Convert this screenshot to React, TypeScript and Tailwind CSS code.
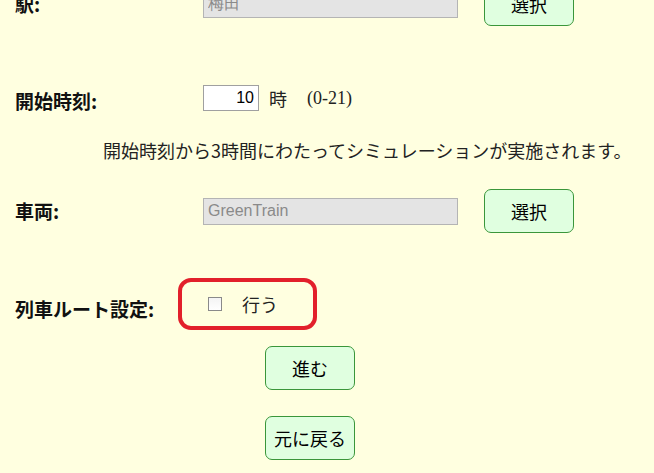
const jp = "font-['Noto_Sans_CJK_JP',sans-serif]";

function SelectButton({ label }: { label: string }) {
  return (
    <button
      type="button"
      className={`h-[44px] w-[90px] shrink-0 rounded-[7px] border-[1.5px] border-[#3a963a] bg-[#e0ffe0] text-[18px] leading-none text-black ${jp}`}
    >
      {label}
    </button>
  );
}

function Label({ text, className = "w-[188px]" }: { text: string; className?: string }) {
  return (
    <div className={`shrink-0 text-[19px] font-bold leading-[24px] text-[#111] ${jp} ${className}`}>
      {text}
    </div>
  );
}

function ReadonlyField({ value }: { value: string }) {
  return (
    <input
      readOnly
      value={value}
      className="h-[27px] w-[255px] shrink-0 border border-[#b4b4b4] bg-[#e4e4e4] px-[4px] font-['Liberation_Sans',sans-serif] text-[16px] text-[#8a8a8a] outline-none"
    />
  );
}

export default function App() {
  return (
    <div className="h-[473px] w-full overflow-hidden bg-[#ffffe0]">
      <div className="-mt-[18px] flex flex-col pl-[15px]">
        {/* 駅 */}
        <div className="flex items-center">
          <Label text="駅:" />
          <ReadonlyField value="梅田" />
          <div className="w-[26px]" />
          <SelectButton label="選択" />
        </div>

        {/* 開始時刻 */}
        <div className="mt-[59px] flex items-center">
          <Label text="開始時刻:" className="w-[188px] translate-y-[3px]" />
          <input
            defaultValue="10"
            className="h-[26px] w-[56px] border border-[#a0a0a0] bg-white px-[4px] text-right font-['Liberation_Sans',sans-serif] text-[16px] text-black outline-none"
          />
          <span className={`ml-[10px] text-[18px] leading-[24px] text-[#222] ${jp}`}>時</span>
          <span className="ml-[20px] font-['Liberation_Serif',serif] text-[18px] leading-[24px] text-[#222]">(0-21)</span>
        </div>

        <p className={`mt-[27px] pl-[88px] text-[18px] leading-[24px] text-[#222] ${jp}`}>
          開始時刻から3時間にわたってシミュレーションが実施されます。
        </p>

        {/* 車両 */}
        <div className="mt-[27px] flex items-center">
          <Label text="車両:" />
          <ReadonlyField value="GreenTrain" />
          <div className="w-[26px]" />
          <SelectButton label="選択" />
        </div>

        {/* 列車ルート設定 */}
        <div className="mt-[45px] flex items-center">
          <Label text="列車ルート設定:" className="w-[163px] translate-y-[5px]" />
          <label className="flex h-[52px] w-[139px] items-center rounded-[13px] border-[4px] border-[#e2202b] pl-[26px]">
            <input
              type="checkbox"
              className="h-[14px] w-[14px] appearance-none border border-[#8a8a8a] bg-gradient-to-b from-[#f4f4f4] to-white"
            />
            <span className={`ml-[20px] text-[18px] leading-[24px] text-[#222] ${jp}`}>行う</span>
          </label>
        </div>

        <div className="mt-[16px] flex flex-col gap-[26px] pl-[250px]">
          <SelectButton label="進む" />
          <SelectButton label="元に戻る" />
        </div>
      </div>
    </div>
  );
}
